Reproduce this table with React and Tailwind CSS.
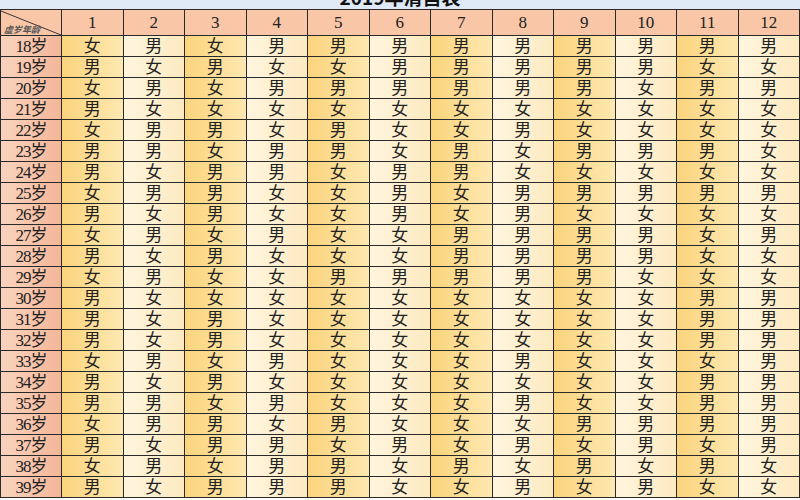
import React from "react";

const rows = [
  "女男女男男男男男男男男男",
  "男女男女女男男男男男女女",
  "女男女男男男男男男女男男",
  "男女女女女女女女女女女女",
  "女男男女男女女男女女女女",
  "男男女男男女男女男男男女",
  "男女男男女男男女女女女女",
  "女男男女女男女男男男男男",
  "男女男女女男女男女女女女",
  "女男女男女女男男男男女男",
  "男女男女女女男男男男女女",
  "女男女女男男男男男女女女",
  "男女女女女女女女女女男男",
  "男女男女女女女女女女男男",
  "男女男女女女女女女女男男",
  "女男女男女女女男女女女男",
  "男女男女女女女女女女男男",
  "男男女男女女女男女女男男",
  "女男男女男女女女男男男男",
  "男女男男女男女男女男女男",
  "女男女男男女男女男女男女",
  "男女男男男女女男女男女女",
];

const font = "font-['Liberation_Serif','Noto_Sans_CJK_SC',serif]";

export default function App() {
  return (
    <div className="w-[800px] h-[500px] overflow-hidden bg-white">
      <div className="-mt-[21px] h-[31px] flex items-end justify-center pb-[3px] border-b border-[#2a2a2a] bg-[#dfe9f6]">
        <span className="text-[19px] font-bold leading-none text-[#111] font-['Noto_Sans_CJK_SC',sans-serif]">
          2019年清宫表
        </span>
      </div>
      <div className={`grid grid-cols-[62px_repeat(12,minmax(0,1fr))] ${font} text-[#222]`}>
        <div className="relative h-[26px] border-r border-b border-l border-[#2a2a2a] bg-[#f9c6a8] overflow-hidden">
          <svg className="absolute inset-0 w-full h-full" viewBox="0 0 62 25" preserveAspectRatio="none">
            <line x1="0" y1="1" x2="62" y2="25" stroke="#333" strokeWidth="1" />
          </svg>
          <span className="absolute left-[3px] bottom-[1px] text-[9px] leading-none font-bold text-[#555] font-['Noto_Sans_CJK_SC',sans-serif] italic">
            虚岁年龄
          </span>
        </div>
        {Array.from({ length: 12 }, (_, i) => (
          <div
            key={i}
            className="h-[26px] flex items-center justify-center border-r border-b border-[#2a2a2a] bg-[#f9c6a8] text-[17px] leading-none"
          >
            {i + 1}
          </div>
        ))}
        {rows.map((r, ri) => (
          <React.Fragment key={ri}>
            <div className="h-[21px] flex items-center justify-center border-r border-b border-l border-[#2a2a2a] bg-linear-to-r from-[#fad3bd] to-[#f4b699] text-[17px] leading-none tracking-[-1px]">
              {ri + 18}岁
            </div>
            {r.split("").map((c, ci) => (
              <div
                key={ci}
                className={
                  "h-[21px] flex items-center justify-center border-r border-b border-[#2a2a2a] text-[17px] leading-none " +
                  (ci % 2 === 0
                    ? "bg-linear-to-r from-[#fbd47c] to-[#fee8b0]"
                    : "bg-linear-to-r from-[#fff5de] to-[#fdeac0]")
                }
              >
                {c}
              </div>
            ))}
          </React.Fragment>
        ))}
      </div>
    </div>
  );
}
